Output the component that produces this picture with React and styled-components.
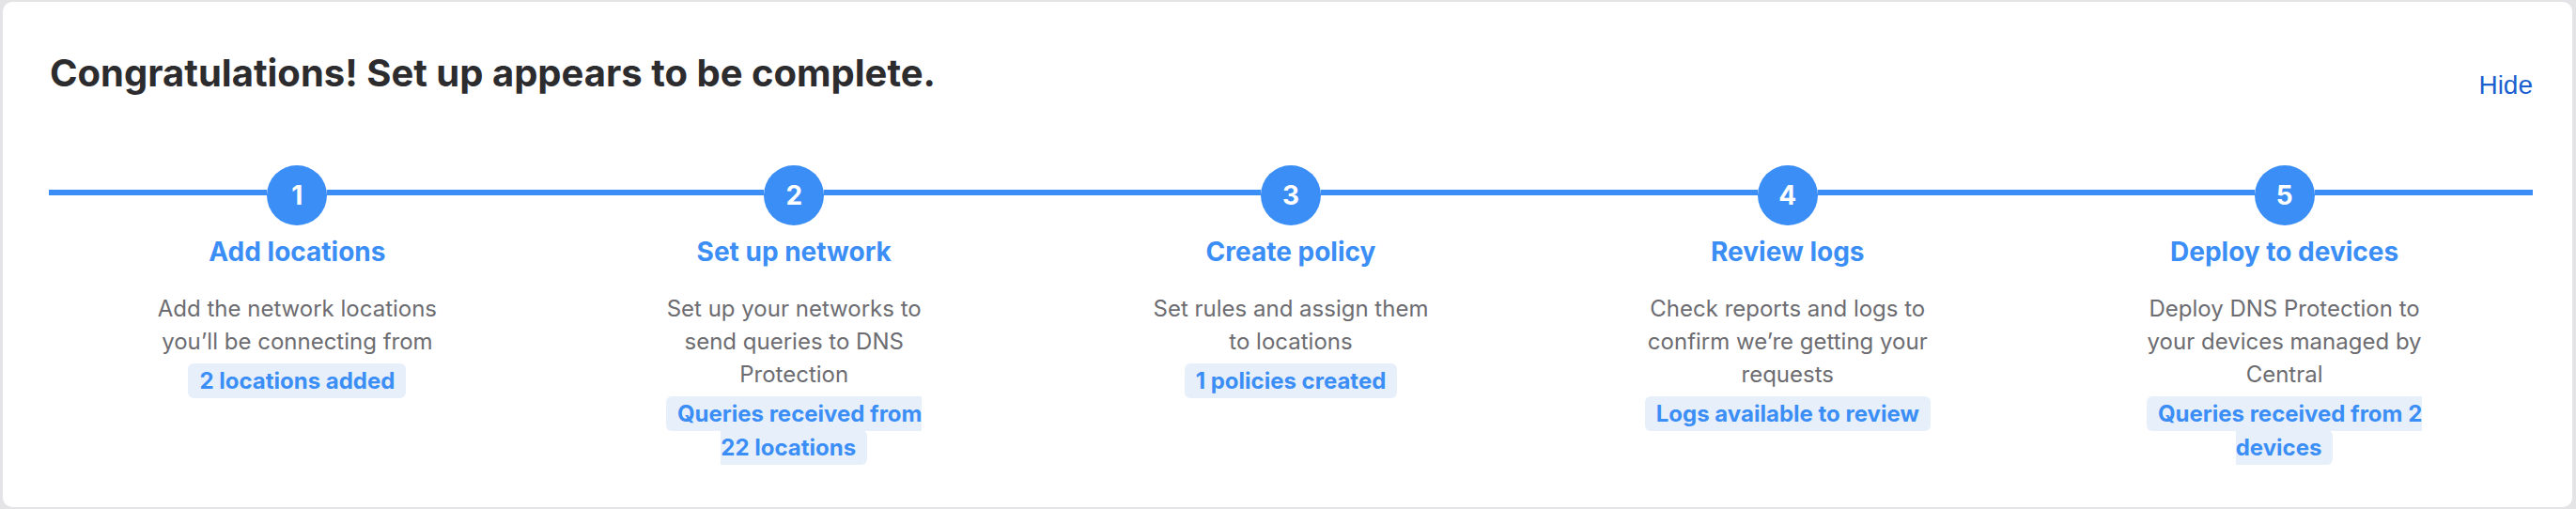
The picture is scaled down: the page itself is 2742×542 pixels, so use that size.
import React from "react";
import styled, { createGlobalStyle } from "styled-components";

const GlobalStyle = createGlobalStyle`
  html, body {
    margin: 0;
    padding: 0;
  }
  body {
    background: #e4e4e6;
    font-family: Inter, "Noto Sans", sans-serif;
    padding: 2px 4px 2px 3px;
  }
`;

const Card = styled.section`
  background: #ffffff;
  border-radius: 10px;
  height: 538px;
  box-sizing: border-box;
  padding: 52px 42px 0 49px;
`;

const Header = styled.div`
  display: flex;
  justify-content: space-between;
  align-items: flex-start;
`;

const Title = styled.h2`
  margin: 0;
  font-size: 40px;
  line-height: 48px;
  font-weight: 700;
  color: #2c2c2f;
  padding-left: 1px;
`;

const HideLink = styled.a`
  font-family: "Liberation Sans", Arial, sans-serif;
  font-size: 28px;
  line-height: 32px;
  color: #1c5fcf;
  text-decoration: none;
  margin-top: 21px;
  cursor: pointer;
`;

const Steps = styled.ol`
  list-style: none;
  margin: 69px 0 0;
  padding: 0;
  display: grid;
  grid-template-columns: repeat(5, 1fr);
`;

const Step = styled.li`
  display: flex;
  flex-direction: column;
  align-items: center;
  text-align: center;
`;

const Track = styled.div`
  display: flex;
  align-items: flex-start;
  width: 100%;
`;

const Segment = styled.div`
  flex: 1;
  height: 6px;
  margin-top: 26px;
  background: #3b8ef5;
`;

const Circle = styled.div`
  width: 64px;
  height: 64px;
  border-radius: 50%;
  background: #3b8ef5;
  color: #ffffff;
  display: flex;
  align-items: center;
  justify-content: center;
  font-size: 28px;
  font-weight: 700;
`;

const StepTitle = styled.h3`
  margin: 11px 0 0;
  font-size: 28px;
  line-height: 34px;
  font-weight: 700;
  color: #3b8ef5;
`;

const Desc = styled.p`
  margin: 26px 0 0;
  max-width: 310px;
  font-size: 24px;
  line-height: 35px;
  color: #6c6c71;
`;

const BadgeLine = styled.div`
  margin-top: 7px;
  max-width: 330px;
  font-size: 24px;
  line-height: 36px;
  font-weight: 700;
`;

const Badge = styled.span`
  background: #e7f0fa;
  color: #3b8ef5;
  padding: 4px 12px;
  border-radius: 6px;
`;

const steps = [
  {
    title: "Add locations",
    desc: "Add the network locations you\u2019ll be connecting from",
    badge: ["2 locations added"],
  },
  {
    title: "Set up network",
    desc: "Set up your networks to send queries to DNS Protection",
    badge: ["Queries received from", "22 locations"],
  },
  {
    title: "Create policy",
    desc: "Set rules and assign them to locations",
    badge: ["1 policies created"],
  },
  {
    title: "Review logs",
    desc: "Check reports and logs to confirm we\u2019re getting your requests",
    badge: ["Logs available to review"],
  },
  {
    title: "Deploy to devices",
    desc: "Deploy DNS Protection to your devices managed by Central",
    badge: ["Queries received from 2", "devices"],
  },
];

export default function App() {
  return (
    <>
      <GlobalStyle />
      <Card>
        <Header>
          <Title>Congratulations! Set up appears to be complete.</Title>
          <HideLink>Hide</HideLink>
        </Header>
        <Steps>
          {steps.map((s, i) => (
            <Step key={i}>
              <Track>
                <Segment />
                <Circle>{i + 1}</Circle>
                <Segment />
              </Track>
              <StepTitle>{s.title}</StepTitle>
              <Desc>{s.desc}</Desc>
              <BadgeLine>
                <Badge>
                  {s.badge.map((part, j) => (
                    <React.Fragment key={j}>
                      {j > 0 && <br />}
                      {part}
                    </React.Fragment>
                  ))}
                </Badge>
              </BadgeLine>
            </Step>
          ))}
        </Steps>
      </Card>
    </>
  );
}
